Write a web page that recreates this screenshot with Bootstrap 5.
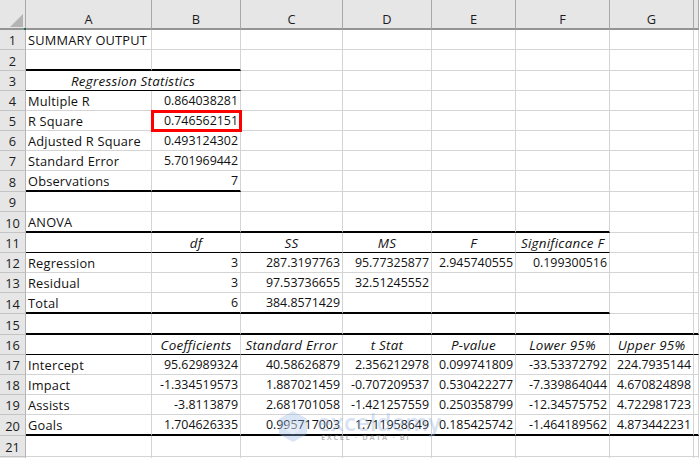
<!DOCTYPE html>
<html lang="en">
<head>
<meta charset="utf-8">
<title>Regression summary output</title>
<link rel="stylesheet" href="https://cdn.jsdelivr.net/npm/bootstrap@5.3.0/dist/css/bootstrap.min.css">
<style>
html,body{margin:0;width:699px;height:458px;overflow:hidden;background:#fff}
.sheet-wrap{position:relative;width:699px;height:458px;overflow:hidden}
.sheet.table{width:699px;table-layout:fixed;border-collapse:separate;border-spacing:0;margin:0;font-family:"Open Sans","Noto Sans",sans-serif;font-size:12.8px;letter-spacing:.2px;line-height:14px;color:#111}
.sheet.table>:not(caption)>*>*{padding:1px 2px 0;border:0;border-right:1px solid #d4d4d4;border-bottom:1px solid #d4d4d4;background:#fff;box-shadow:none;white-space:nowrap;overflow:hidden;vertical-align:middle;color:#111;font-weight:400}
.sheet.table>:not(caption)>*>.hd{background:#e6e6e6;text-align:center;color:#1c1c1c;font-size:12.8px;letter-spacing:0}
.sheet.table>thead>*>.hd{border-right:1px solid #a8a8a8;border-bottom:2px solid #949494;padding-top:10px}
.sheet.table>tbody>*>.hd{border-right:1px solid #b4b4b4;border-bottom:1px solid #c4c4c4;padding:1px 0 0}
.sheet.table>:not(caption)>*>.num{text-align:right;font-size:12.4px;letter-spacing:0}
.sheet.table>:not(caption)>*>.cap{text-align:center;font-style:italic;font-size:13.4px;letter-spacing:.25px}
.sheet.table>:not(caption)>*>.thick{border-bottom:2px solid #000}
.sheet.table>:not(caption)>*>.thin{border-bottom:1px solid #000}
.sheet.table>:not(caption)>*>.picked{outline:3px solid #f00;outline-offset:-2px}
.r30{height:30px}.r20{height:20px}.r21{height:21px}
.w0{width:26px}.wa{width:126px}.wb{width:89px}.wc{width:102px}.wd{width:89px}.we{width:84px}.wf{width:94px}.wg{width:84px}.wh{width:5px}
.corner{position:absolute;left:10px;top:14px;width:13px;height:13px}
.tick{position:absolute;left:24px;top:28px;width:2px;height:2px;background:#217346}
.stamp{position:absolute;left:279px;top:411px;display:flex;gap:10px;pointer-events:none;font-family:"Open Sans",sans-serif}
.stamp-word{font-size:24px;line-height:22px;font-weight:600;color:rgba(150,180,225,.4)}
.stamp-sub{font-size:7.5px;line-height:9px;font-weight:700;letter-spacing:1.6px;color:rgba(120,120,120,.5);padding-left:4px}
</style>
</head>
<body>
<div class="sheet-wrap">
<table class="table sheet">
<colgroup><col class="w0"><col class="wa"><col class="wb"><col class="wc"><col class="wd"><col class="we"><col class="wf"><col class="wg"><col class="wh"></colgroup>
<thead>
<tr class="r30"><th class="hd"></th><th class="hd">A</th><th class="hd">B</th><th class="hd">C</th><th class="hd">D</th><th class="hd">E</th><th class="hd">F</th><th class="hd">G</th><th class="hd"></th></tr>
</thead>
<tbody>
<tr class="r20"><td class="hd">1</td><td>SUMMARY OUTPUT</td><td></td><td></td><td></td><td></td><td></td><td></td><td></td></tr>
<tr class="r21"><td class="hd">2</td><td class="thick"></td><td class="thick"></td><td></td><td></td><td></td><td></td><td></td><td></td></tr>
<tr class="r20"><td class="hd">3</td><td colspan="2" class="cap thin">Regression Statistics</td><td></td><td></td><td></td><td></td><td></td><td></td></tr>
<tr class="r20"><td class="hd">4</td><td>Multiple R</td><td class="num">0.864038281</td><td></td><td></td><td></td><td></td><td></td><td></td></tr>
<tr class="r20"><td class="hd">5</td><td>R Square</td><td class="num picked">0.746562151</td><td></td><td></td><td></td><td></td><td></td><td></td></tr>
<tr class="r20"><td class="hd">6</td><td>Adjusted R Square</td><td class="num">0.493124302</td><td></td><td></td><td></td><td></td><td></td><td></td></tr>
<tr class="r20"><td class="hd">7</td><td>Standard Error</td><td class="num">5.701969442</td><td></td><td></td><td></td><td></td><td></td><td></td></tr>
<tr class="r21"><td class="hd">8</td><td class="thick">Observations</td><td class="num thick">7</td><td></td><td></td><td></td><td></td><td></td><td></td></tr>
<tr class="r20"><td class="hd">9</td><td></td><td></td><td></td><td></td><td></td><td></td><td></td><td></td></tr>
<tr class="r21"><td class="hd">10</td><td class="thick">ANOVA</td><td class="thick"></td><td class="thick"></td><td class="thick"></td><td class="thick"></td><td class="thick"></td><td></td><td></td></tr>
<tr class="r20"><td class="hd">11</td><td class="thin"></td><td class="cap thin">df</td><td class="cap thin">SS</td><td class="cap thin">MS</td><td class="cap thin">F</td><td class="cap thin">Significance F</td><td></td><td></td></tr>
<tr class="r20"><td class="hd">12</td><td>Regression</td><td class="num">3</td><td class="num">287.3197763</td><td class="num">95.77325877</td><td class="num">2.945740555</td><td class="num">0.199300516</td><td></td><td></td></tr>
<tr class="r20"><td class="hd">13</td><td>Residual</td><td class="num">3</td><td class="num">97.53736655</td><td class="num">32.51245552</td><td></td><td></td><td></td><td></td></tr>
<tr class="r21"><td class="hd">14</td><td class="thick">Total</td><td class="num thick">6</td><td class="num thick">384.8571429</td><td class="thick"></td><td class="thick"></td><td class="thick"></td><td></td><td></td></tr>
<tr class="r21"><td class="hd">15</td><td class="thick"></td><td class="thick"></td><td class="thick"></td><td class="thick"></td><td class="thick"></td><td class="thick"></td><td class="thick"></td><td class="thick"></td></tr>
<tr class="r20"><td class="hd">16</td><td class="thin"></td><td class="cap thin">Coefficients</td><td class="cap thin">Standard Error</td><td class="cap thin">t Stat</td><td class="cap thin">P-value</td><td class="cap thin">Lower 95%</td><td class="cap thin">Upper 95%</td><td class="thin"></td></tr>
<tr class="r20"><td class="hd">17</td><td>Intercept</td><td class="num">95.62989324</td><td class="num">40.58626879</td><td class="num">2.356212978</td><td class="num">0.099741809</td><td class="num">-33.53372792</td><td class="num">224.7935144</td><td></td></tr>
<tr class="r20"><td class="hd">18</td><td>Impact</td><td class="num">-1.334519573</td><td class="num">1.887021459</td><td class="num">-0.707209537</td><td class="num">0.530422277</td><td class="num">-7.339864044</td><td class="num">4.670824898</td><td></td></tr>
<tr class="r20"><td class="hd">19</td><td>Assists</td><td class="num">-3.8113879</td><td class="num">2.681701058</td><td class="num">-1.421257559</td><td class="num">0.250358799</td><td class="num">-12.34575752</td><td class="num">4.722981723</td><td></td></tr>
<tr class="r21"><td class="hd">20</td><td class="thick">Goals</td><td class="num thick">1.704626335</td><td class="num thick">0.995717003</td><td class="num thick">1.711958649</td><td class="num thick">0.185425742</td><td class="num thick">-1.464189562</td><td class="num thick">4.873442231</td><td class="thick"></td></tr>
<tr class="r21"><td class="hd">21</td><td></td><td></td><td></td><td></td><td></td><td></td><td></td><td></td></tr>
<tr class="r21"><td class="hd"></td><td></td><td></td><td></td><td></td><td></td><td></td><td></td><td></td></tr>
</tbody>
</table>
<svg class="corner" viewBox="0 0 13 13" aria-hidden="true"><path d="M13 0V13H0Z" fill="#b4b4b4"/></svg>
<div class="tick"></div>
<div class="stamp">
<svg width="28" height="31" viewBox="0 0 28 31" aria-hidden="true"><path d="M14 0 28 7.700V23.300L14 31 0 23.300V7.700Z" fill="rgba(150,180,225,.35)"/><path d="M14 9 21 13V19.500L14 23.500 7 19.500V13Z" fill="rgba(255,255,255,.3)"/></svg>
<div><div class="stamp-word">exceldemy</div><div class="stamp-sub">EXCEL · DATA · BI</div></div>
</div>
</div>
<script src="https://cdn.jsdelivr.net/npm/bootstrap@5.3.0/dist/js/bootstrap.bundle.min.js"></script>
</body>
</html>
